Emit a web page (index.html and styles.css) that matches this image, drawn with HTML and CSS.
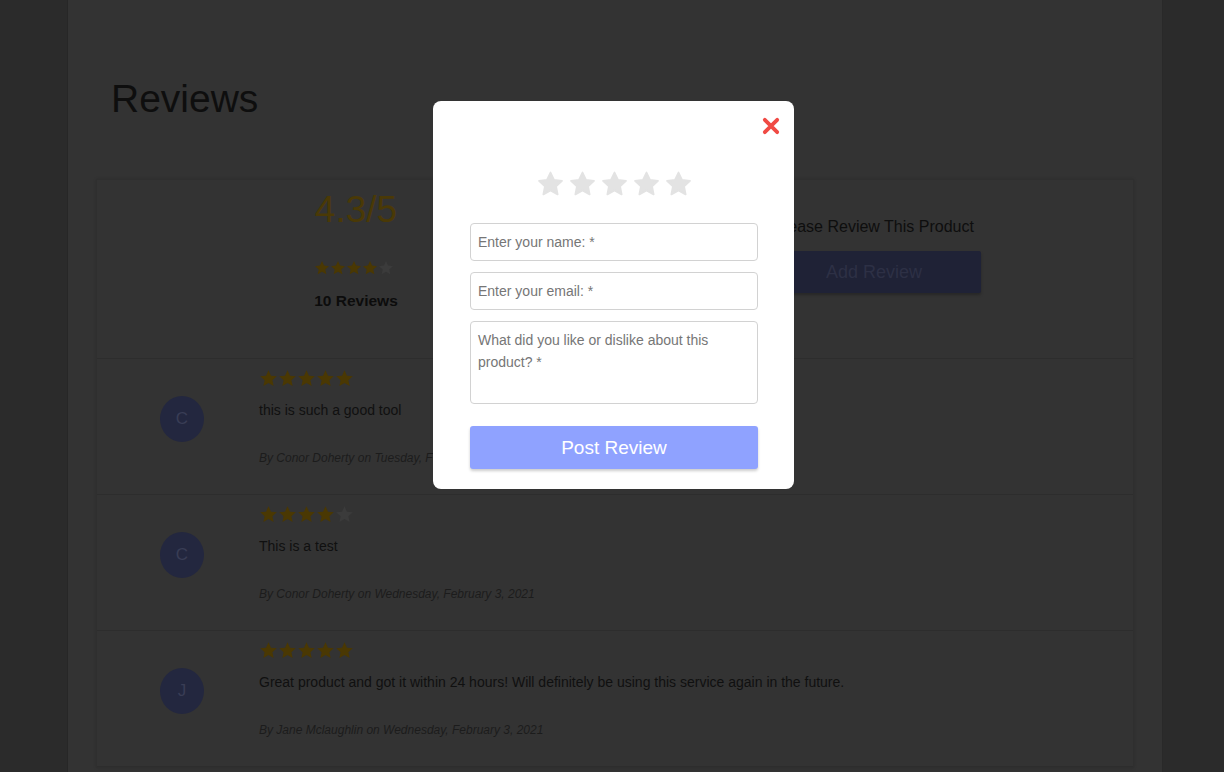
FILE: index.html
```html
<!DOCTYPE html>
<html lang="en">
<head>
    <meta charset="UTF-8">
    <meta name="viewport" content="width=device-width, initial-scale=1.0">
    <title>Reviews</title>
    <link rel="stylesheet" href="styles.css">
</head>
<body>

<svg class="defs" width="0" height="0">
    <defs>
        <symbol id="star" viewBox="0 0 24 24">
            <path d="M12 1.5l3.1 6.9 7.4.8-5.6 5 1.6 7.3L12 17.7l-6.5 3.8 1.6-7.3-5.6-5 7.4-.8z"/>
        </symbol>
        <symbol id="star-round" viewBox="0 0 24 24">
            <path d="M12 2.5l2.9 6.1 6.6.8-4.9 4.6 1.3 6.6L12 17.3l-5.9 3.3 1.3-6.6-4.9-4.6 6.6-.8z" stroke-linejoin="round"/>
        </symbol>
    </defs>
</svg>

<div class="page">
    <h1 class="title">Reviews</h1>

    <div class="card">
        <div class="summary">
            <div class="summary-col">
                <div class="score">4.3/5</div>
                <div class="stars small">
                    <svg class="on"><use href="#star"/></svg>
                    <svg class="on"><use href="#star"/></svg>
                    <svg class="on"><use href="#star"/></svg>
                    <svg class="on"><use href="#star"/></svg>
                    <svg class="off"><use href="#star"/></svg>
                </div>
                <div class="count">10 Reviews</div>
            </div>
            <div class="summary-col right">
                <p class="ask">Please Review This Product</p>
                <button type="button" class="add-btn">Add Review</button>
            </div>
        </div>

        <div class="review">
            <div class="avatar-col"><div class="avatar">C</div></div>
            <div class="review-body">
                <div class="stars">
                    <svg class="on"><use href="#star"/></svg>
                    <svg class="on"><use href="#star"/></svg>
                    <svg class="on"><use href="#star"/></svg>
                    <svg class="on"><use href="#star"/></svg>
                    <svg class="on"><use href="#star"/></svg>
                </div>
                <p class="review-text">this is such a good tool</p>
                <p class="byline">By Conor Doherty on Tuesday, February 2, 2021</p>
            </div>
        </div>

        <div class="review">
            <div class="avatar-col"><div class="avatar">C</div></div>
            <div class="review-body">
                <div class="stars">
                    <svg class="on"><use href="#star"/></svg>
                    <svg class="on"><use href="#star"/></svg>
                    <svg class="on"><use href="#star"/></svg>
                    <svg class="on"><use href="#star"/></svg>
                    <svg class="off"><use href="#star"/></svg>
                </div>
                <p class="review-text">This is a test</p>
                <p class="byline">By Conor Doherty on Wednesday, February 3, 2021</p>
            </div>
        </div>

        <div class="review">
            <div class="avatar-col"><div class="avatar">J</div></div>
            <div class="review-body">
                <div class="stars">
                    <svg class="on"><use href="#star"/></svg>
                    <svg class="on"><use href="#star"/></svg>
                    <svg class="on"><use href="#star"/></svg>
                    <svg class="on"><use href="#star"/></svg>
                    <svg class="on"><use href="#star"/></svg>
                </div>
                <p class="review-text">Great product and got it within 24 hours! Will definitely be using this service again in the future.</p>
                <p class="byline">By Jane Mclaughlin on Wednesday, February 3, 2021</p>
            </div>
        </div>
    </div>
</div>

<div class="modal">
    <button type="button" class="close" aria-label="Close">
        <svg viewBox="0 0 16 16"><path d="M2.5 2.5l11 11M13.5 2.5l-11 11"/></svg>
    </button>
    <div class="stars pick">
        <svg><use href="#star-round"/></svg>
        <svg><use href="#star-round"/></svg>
        <svg><use href="#star-round"/></svg>
        <svg><use href="#star-round"/></svg>
        <svg><use href="#star-round"/></svg>
    </div>
    <form class="review-form">
        <input type="text" class="field" placeholder="Enter your name: *">
        <input type="email" class="field" placeholder="Enter your email: *">
        <textarea class="field area" placeholder="What did you like or dislike about this product? *"></textarea>
        <button type="button" class="post-btn">Post Review</button>
    </form>
</div>

</body>
</html>
```

FILE: styles.css
```css
body {
    font-family: 'Liberation Sans', Arial, sans-serif;
    margin: 0;
    padding: 0;
    height: 772px;
    overflow: hidden;
    background-color: #2b2b2b;
    color: #111;
}
.defs {
    position: absolute;
}
.page {
    width: 1038px;
    min-height: 772px;
    margin-left: 67px;
    padding: 0 28px;
    background-color: #333;
    border-left: 1px solid #272727;
    border-right: 1px solid #292929;
}
.title {
    margin: 0;
    padding: 77px 0 0 15px;
    font-size: 39px;
    font-weight: normal;
    line-height: 44px;
    color: #0e0e0e;
}
.card {
    margin-top: 58px;
    border: 1px solid #2f2f2f;
    box-shadow: 0 0 3px rgba(0, 0, 0, 0.15);
}
.summary {
    display: grid;
    grid-template-columns: 1fr 1fr;
    height: 178px;
    border-bottom: 1px solid #2d2d2d;
}
.summary-col {
    display: flex;
    flex-direction: column;
    align-items: center;
    padding-top: 8px;
}
.score {
    font-size: 37px;
    line-height: 44px;
    color: #4a3906;
}
.stars {
    display: flex;
    gap: 0;
    height: 19px;
}
.stars svg {
    width: 19px;
    height: 19px;
}
.stars .on {
    fill: #4a3803;
}
.stars .off {
    fill: #3b3b3b;
}
.stars.small {
    height: 16px;
    margin-top: 28px;
    margin-left: -4px;
}
.stars.small svg {
    width: 16px;
    height: 16px;
}
.count {
    margin-top: 16px;
    font-size: 15.5px;
    font-weight: bold;
    line-height: 18px;
    color: #0c0c0c;
}
.summary-col.right {
    padding-top: 38px;
}
.ask {
    margin: 0;
    font-size: 16px;
    line-height: 18px;
    color: #0e0e0e;
}
.add-btn {
    margin-top: 15px;
    width: 214px;
    height: 42px;
    border: none;
    border-radius: 2px;
    background-color: #1f2236;
    color: #2d3045;
    font-family: inherit;
    font-size: 18px;
    box-shadow: 0 2px 3px rgba(0, 0, 0, 0.25);
}
.review {
    display: grid;
    grid-template-columns: 162px 1fr;
    height: 135px;
    border-bottom: 1px solid #2d2d2d;
}
.avatar-col {
    padding: 37px 0 0 63px;
}
.avatar {
    width: 44px;
    height: 46px;
    border-radius: 50%;
    background-color: #23273f;
    color: #393d55;
    font-size: 17px;
    display: flex;
    align-items: center;
    justify-content: center;
}
.review-body {
    padding-top: 10px;
}
.review-text {
    margin: 12px 0 0;
    font-size: 14px;
    line-height: 20px;
    color: #101010;
}
.review-body .byline {
    margin: 30px 0 0;
    font-size: 12px;
    font-style: italic;
    line-height: 16px;
    color: #1c1c1c;
}
.modal {
    position: fixed;
    top: 101px;
    left: 433px;
    width: 361px;
    height: 388px;
    box-sizing: border-box;
    padding: 0 36px 0 37px;
    background-color: white;
    border-radius: 8px;
}
.close {
    position: absolute;
    top: 16px;
    right: 14px;
    width: 18px;
    height: 18px;
    padding: 0;
    border: none;
    background: none;
}
.close svg {
    width: 18px;
    height: 18px;
    stroke: #f04a44;
    stroke-width: 3.4;
    stroke-linecap: round;
}
.stars.pick {
    justify-content: center;
    gap: 3px;
    height: 30px;
    margin-top: 68px;
}
.stars.pick svg {
    width: 29px;
    height: 30px;
    fill: #e3e3e3;
    stroke: #e3e3e3;
    stroke-width: 1.5;
}
.review-form {
    display: flex;
    flex-direction: column;
    margin-top: 24px;
}
.field {
    box-sizing: border-box;
    width: 288px;
    height: 38px;
    margin: 0 0 11px;
    padding: 0 7px;
    border: 1px solid #d2d2d2;
    border-radius: 4px;
    font-family: 'Liberation Sans', Arial, sans-serif;
    font-size: 14px;
    color: #333;
    outline: none;
}
.field::placeholder {
    color: #767676;
}
.field.area {
    height: 83px;
    padding: 7px 7px;
    line-height: 22px;
    resize: none;
}
.post-btn {
    margin-top: 11px;
    width: 288px;
    height: 43px;
    border: none;
    border-radius: 3px;
    background-color: #8fa2ff;
    color: white;
    font-family: inherit;
    font-size: 19px;
    box-shadow: 0 2px 3px rgba(0, 0, 0, 0.2);
}
```
